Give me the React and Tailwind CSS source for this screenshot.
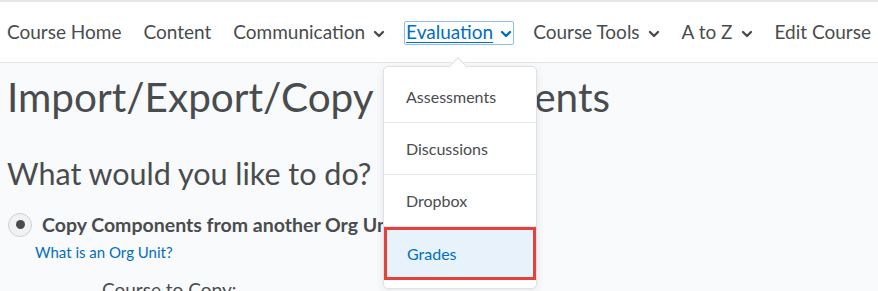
import React from 'react';

const Chevron = ({ className }) => (
    <svg viewBox="0 0 12 8" className={className} fill="none" stroke="currentColor" strokeWidth="2.4" strokeLinecap="round" strokeLinejoin="round">
        <path d="M2 2l4 4 4-4" />
    </svg>
);

const NavItem = ({ label, menu }) => (
    <div className="flex items-center gap-[8px]">
        <span>{label}</span>
        {menu && <Chevron className="w-[12px] h-[8px] mt-[2px]" />}
    </div>
);

const App = () => {
    const menuItems = ['Assessments', 'Discussions', 'Dropbox'];

    return (
        <div className="relative w-[878px] h-[291px] overflow-hidden bg-[#f9fafb] text-[#494c4e]" style={{ fontFamily: 'Lato, "Open Sans", sans-serif' }}>
            {/* top navbar */}
            <div className="h-[2px] bg-[#e6e6e6]" />
            <nav className="h-[61px] bg-white border-b border-[#e3e5e8] flex items-center gap-[22px] pl-[7px] text-[19px] whitespace-nowrap pt-[1px]">
                <NavItem label="Course Home" />
                <NavItem label="Content" />
                <NavItem label="Communication" menu />
                <div className="flex items-center gap-[7px] text-[#006fbf] border-[1.5px] border-[#8dbbf2] rounded-[2px] px-[1px] h-[24px] -ml-[3px] -mr-[3px]">
                    <span className="underline underline-offset-[3px] decoration-[1px]">Evaluation</span>
                    <Chevron className="w-[12px] h-[8px] mt-[2px]" />
                </div>
                <NavItem label="Course Tools" menu />
                <NavItem label="A to Z" menu />
                <NavItem label="Edit Course" />
            </nav>

            {/* page content */}
            <div className="pl-[7px]">
                <h1 className="text-[40.5px] leading-[48px] mt-[10px] whitespace-nowrap">Import/Export/Copy Components</h1>
                <h2 className="text-[30.5px] leading-[36px] mt-[34px] whitespace-nowrap">What would you like to do?</h2>
                <div className="flex items-center gap-[10px] mt-[19px] ml-[1px]">
                    <div className="w-[24px] h-[24px] rounded-full border border-[#cdd0d4] bg-[#f1f2f3] flex items-center justify-center">
                        <div className="w-[9px] h-[9px] rounded-full bg-[#494c4e]" />
                    </div>
                    <span className="text-[19.5px] font-bold whitespace-nowrap">Copy Components from another Org Unit</span>
                </div>
                <a className="block text-[15px] text-[#006fbf] ml-[28px] mt-[3px] leading-[20px]">What is an Org Unit?</a>
                <div className="text-[19px] ml-[95px] mt-[14px] whitespace-nowrap">Course to Copy:</div>
            </div>

            {/* Evaluation dropdown menu */}
            <div className="absolute left-[383px] top-[66px] w-[154px] bg-white border border-[#dfe1e4] rounded-[5px] shadow-[0_2px_10px_rgba(0,0,0,0.08)] pt-[4px] pb-[8px]">
                <div className="absolute left-[67px] -top-[7px] w-[14px] h-[14px] bg-white border-l border-t border-[#dfe1e4] rotate-45" />
                {menuItems.map((item) => (
                    <div key={item} className="relative h-[52px] flex items-center pl-[22px] text-[16px] border-b border-[#e6e7e9]">
                        {item}
                    </div>
                ))}
                <div className="relative h-[53px] flex items-center pl-[20px] text-[16px] text-[#006fbf] bg-[#e8f2fa] border-[3px] border-[#e4413d]">
                    Grades
                </div>
            </div>
        </div>
    );
};

export default App;
